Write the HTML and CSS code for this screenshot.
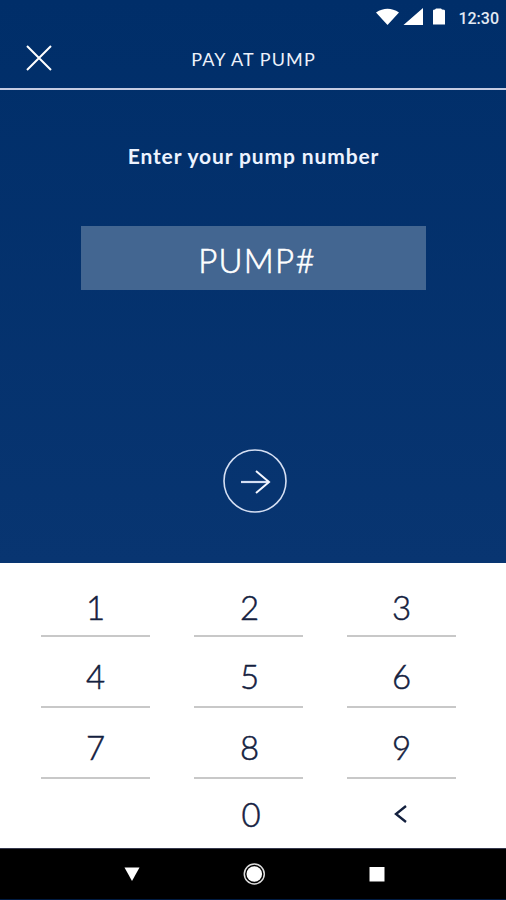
FILE: index.html
```html
<!DOCTYPE html>
<html lang="en">
<head>
<meta charset="utf-8">
<title>Pay at pump</title>
<link rel="stylesheet" href="styles.css">
</head>
<body>
<div class="status">
  <svg class="signals" width="72" height="18" viewBox="0 0 72 18"><path d="M0 4.500Q11.500-3 23 4.500L11.500 17ZM27.500 17L47 0V17ZM57 2.500Q57 1.500 59 1.500L60 .5H65L66 1.500Q69 1.500 69 2.500V16.500H57Z"/></svg>
  <span class="time">12:30</span>
</div>
<header class="header">
  <svg class="close" width="26" height="26" viewBox="0 0 26 26"><path d="M1 1L25 25M25 1L1 25"/></svg>
  <h1 class="title">PAY AT PUMP</h1>
</header>
<main class="main">
  <p class="prompt">Enter your pump number</p>
  <div class="field">PUMP#</div>
  <svg class="go" width="64" height="64" viewBox="0 0 64 64"><circle cx="32" cy="32" r="31"/><path class="shaft" d="M18 33H46"/><path class="head" d="M33 22L46 33L33 44"/></svg>
</main>
<section class="keypad">
  <div class="key">1</div><div class="key mid">2</div><div class="key">3</div>
  <div class="key low">4</div><div class="key low mid">5</div><div class="key low">6</div>
  <div class="key low">7</div><div class="key low mid">8</div><div class="key low">9</div>
  <div class="key last"></div><div class="key last zero">0</div>
  <div class="key last erase"><svg class="back" width="14" height="18" viewBox="0 0 14 18"><path d="M12 1L2 9L12 17"/></svg></div>
</section>
<nav class="nav">
  <svg width="506" height="52" viewBox="0 0 506 52"><path d="M124.500 19.500H139.500L132 33Z"/><circle cx="254.300" cy="26" r="7.800"/><circle class="ring" cx="254.300" cy="26" r="10"/><path d="M369.500 19h15v14.500h-15Z"/></svg>
</nav>
</body>
</html>
```
FILE: styles.css
```css
* { box-sizing: border-box; }
body { margin: 0; width: 506px; height: 900px; overflow: hidden; background: linear-gradient(#002e69, #083571 563px); color: #fff; font-family: Lato, sans-serif; }
svg { display: block; }
.status { height: 34px; padding: 8px 7px 0 0; display: flex; justify-content: flex-end; gap: 10px; }
.signals { fill: #fff; }
.time { font: 500 16px/22px Roboto, sans-serif; color: #e3eaf4; }
.header { height: 56px; border-bottom: 2px solid #c5cbe2; display: grid; grid-template-columns: 1fr auto 1fr; padding: 11px 25px 0 26px; }
.close { stroke: #fff; stroke-width: 2; fill: none; }
.title { margin: 0; font-size: 18px; line-height: 28px; font-weight: 400; letter-spacing: 1.1px; color: #edf1fa; }
.main { height: 473px; display: flex; flex-direction: column; align-items: center; }
.prompt { margin: 52px 0 0; padding-left: 1px; font-size: 21px; line-height: 28px; font-weight: 700; letter-spacing: .88px; color: #edf3ff; }
.field { margin-top: 56px; width: 345px; height: 64px; padding-left: 8px; background: #436691; text-align: center; font-size: 33px; font-weight: 300; -webkit-text-stroke: .6px currentColor; line-height: 69px; letter-spacing: 1.3px; }
.go { margin: 159px 0 0 4px; fill: none; stroke: #d5dff3; stroke-width: 1.6; }
.shaft { stroke-width: 2.2; }
.head { stroke: #f3f6ff; stroke-width: 2; }
.keypad { height: 285px; background: #fff; color: #13203e; padding: 3px 50px 0 41px; display: grid; grid-template-columns: repeat(3, 109px); grid-template-rows: 71px 71px 71px 69px; column-gap: 44px; }
.key { display: flex; align-items: center; justify-content: center; border-bottom: 2px solid #c8c8c8; font-size: 33px; font-weight: 300; -webkit-text-stroke: .5px currentColor; padding-top: 12px; }
.low { padding-top: 9px; }
.mid { padding-left: 2px; }
.last { border: 0; padding-top: 1px; }
.zero { padding-left: 5px; }
.erase { padding-right: 2px; }
.back { fill: none; stroke: #13203e; stroke-width: 2.4; }
.nav { height: 52px; background: #000; border-top: 1px solid #35384d; border-bottom: 1px solid #001b43; fill: #fff; }
.nav svg { margin-top: -1px; }
.ring { fill: none; stroke: #ddd; stroke-width: 1.500; }
```
